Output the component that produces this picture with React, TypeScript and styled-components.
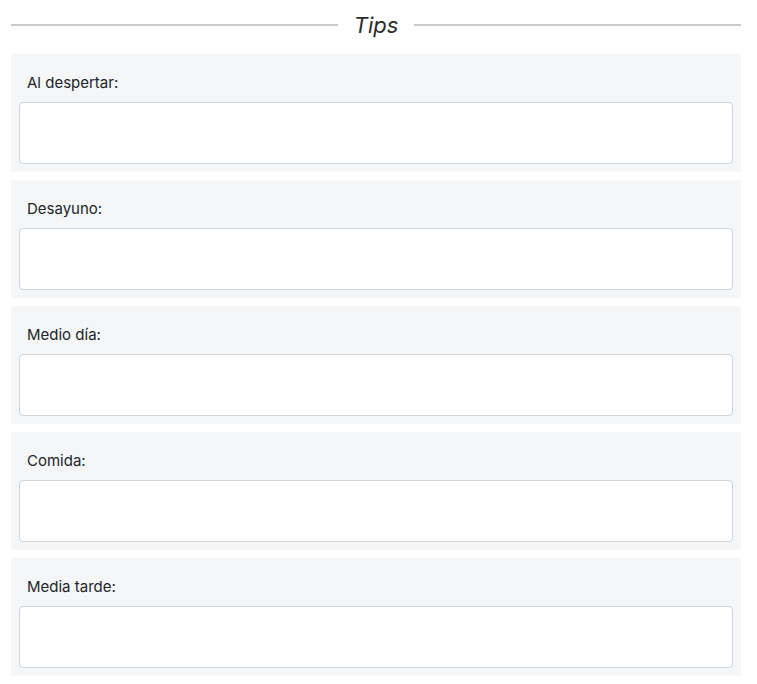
import React from 'react';
import styled, { createGlobalStyle } from 'styled-components';

const GlobalStyle = createGlobalStyle`
  body {
    margin: 0;
    background: #ffffff;
    font-family: Inter, "Liberation Sans", Arial, sans-serif;
    color: #212529;
  }
`;

const Page = styled.div`
  padding: 8px 16px 8px 11px;
  width: 730px;
`;

const Divider = styled.div`
  display: flex;
  align-items: center;
  gap: 16px;
  height: 34px;
  margin-bottom: 12px;
`;

const Rule = styled.div`
  flex: 1;
  height: 2px;
  background-color: #c9c9cb;
`;

const Heading = styled.h3`
  margin: 0;
  font-size: 22px;
  font-weight: 400;
  font-style: italic;
  color: #2b2b2b;
`;

const List = styled.div`
  display: flex;
  flex-direction: column;
  gap: 8px;
`;

const Card = styled.div`
  background-color: #f5f6f8;
  padding: 18px 8px 8px;
  height: 118px;
  box-sizing: border-box;
  display: flex;
  flex-direction: column;
`;

const Label = styled.label`
  font-size: 15px;
  line-height: 22px;
  padding-left: 8px;
  margin-bottom: 8px;
  color: #212529;
`;

const Field = styled.textarea`
  height: 62px;
  box-sizing: border-box;
  border: 1px solid #ced4da;
  border-radius: 4px;
  background: #ffffff;
  resize: none;
  font-family: inherit;
  font-size: 15px;
  padding: 6px 12px;
  outline: none;
`;

const slots = ['Al despertar:', 'Desayuno:', 'Medio día:', 'Comida:', 'Media tarde:'];

const App: React.FC = () => (
  <>
    <GlobalStyle />
    <Page>
      <Divider>
        <Rule />
        <Heading>Tips</Heading>
        <Rule />
      </Divider>
      <List>
        {slots.map((slot) => (
          <Card key={slot}>
            <Label>{slot}</Label>
            <Field />
          </Card>
        ))}
      </List>
    </Page>
  </>
);

export default App;
